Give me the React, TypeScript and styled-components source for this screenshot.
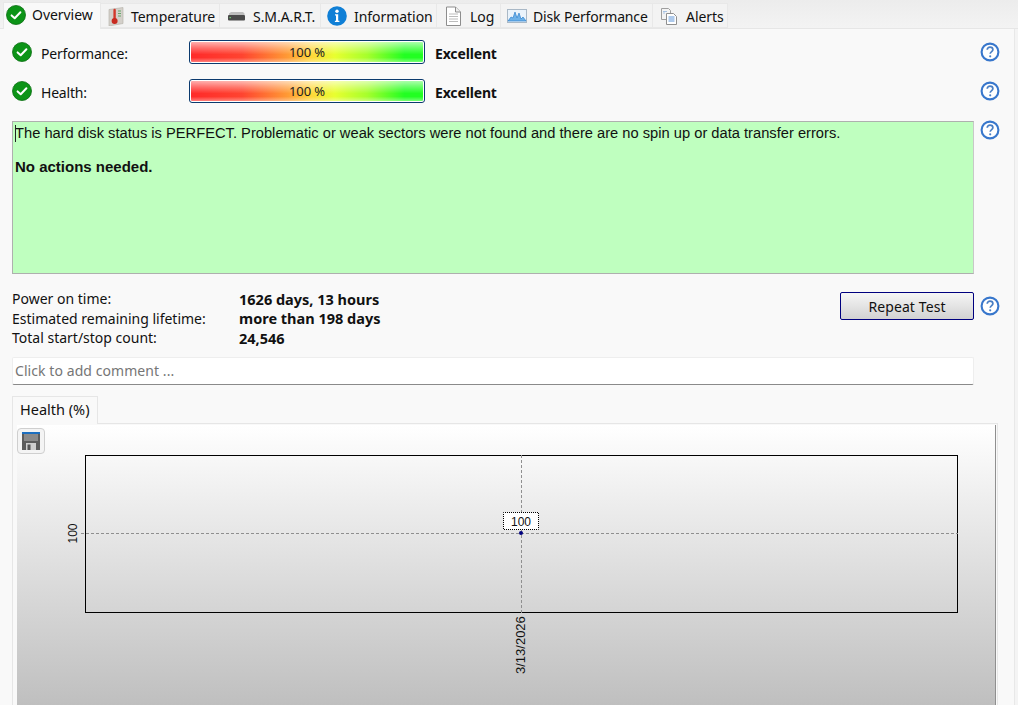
import React from "react";
import styled, { createGlobalStyle } from "styled-components";

const Global = createGlobalStyle`
  html, body { margin: 0; padding: 0; height: 100%; overflow: hidden; background: #f4f4f4; }
  #root { height: 705px; }
`;
const UI = `"Noto Sans", "Open Sans", sans-serif`;
const ARIAL = `"Liberation Sans", Arial, sans-serif`;

const Page = styled.div`
  width: 1018px; height: 705px; overflow: hidden; background: #f4f4f4;
  font-family: ${UI}; font-size: 14px; color: #111; display: flex; flex-direction: column;
`;
const TabBar = styled.div`
  height: 29px; flex: none; display: flex; align-items: flex-end; padding-left: 3px; box-sizing: border-box;
  background: linear-gradient(#ececec, #f3f3f3); border-bottom: 1px solid #e6e6e6;
`;
const Tab = styled.div<{ $w: number; $pad: number; $gap: number; $active?: boolean }>`
  width: ${p => p.$w}px; height: ${p => (p.$active ? 27 : 25)}px; box-sizing: border-box; flex: none;
  display: flex; align-items: center; gap: ${p => p.$gap}px; padding-left: ${p => p.$pad}px;
  padding-top: ${p => (p.$active ? 0 : 1)}px; padding-bottom: ${p => (p.$active ? 3 : 0)}px;
  white-space: nowrap; letter-spacing: ${p => (p.$w === 152 ? -0.15 : -0.05)}px;
  background: ${p => (p.$active ? "#f9f9f9" : "#f3f3f3")};
  border: 1px solid #e8e8e8; border-left-width: ${p => (p.$active ? 1 : 0)}px; border-bottom-width: ${p => (p.$active ? 0 : 1)}px;
  margin-bottom: ${p => (p.$active ? -1 : 0)}px;
  position: relative;
`;
const Body = styled.div`
  flex: 1; display: flex; flex-direction: column; padding: 11px 0 0 12px; min-height: 0; box-sizing: border-box;
  background: #f9f9f9; border-right: 1px solid #e8e8e8; margin-right: 3px;
  position: relative;
`;
const StatusRow = styled.div<{ $gap: number }>`
  display: flex; align-items: center; height: 24px; margin-bottom: ${p => p.$gap}px; position: relative;
`;
const Label = styled.div`
  width: 177px; display: flex; align-items: center; gap: 9px; letter-spacing: -0.2px; flex: none;
`;
const LabelText = styled.span`
  padding-top: 2px;
`;
const Bar = styled.div`
  width: 236px; height: 24px; flex: none; box-sizing: border-box; border: 1px solid #0b3a6e; border-radius: 3px;
  padding: 1px; background: #fff;
`;
const BarFill = styled.div`
  height: 100%; border-radius: 1px; display: flex; align-items: center; justify-content: center;
  font-size: 13px; letter-spacing: -0.1px; color: #222; box-sizing: border-box;
  font-family: ${UI};
  background:
    linear-gradient(rgba(255,255,255,.62) 0%, rgba(255,255,255,.3) 30%, rgba(255,255,255,0) 62%, rgba(255,255,255,0) 78%, rgba(255,255,255,.38) 100%),
    linear-gradient(90deg, #ff2a2a 0%, #ff4430 22%, #ff9c35 42%, #ffd83a 52%, #e8ff30 62%, #a6ff2c 76%, #22ff22 92%, #22ff22 100%);
`;
const Verdict = styled.div`
  margin-left: 10px; padding-top: 2px; font-weight: 700; letter-spacing: -0.15px;
`;
const HelpSlot = styled.div<{ $top?: number }>`
  position: absolute; left: 968px; top: ${p => (p.$top === undefined ? "50%" : `${p.$top}px`)}; transform: translateY(-50%); width: 20px; height: 20px;
`;
const MessageRow = styled.div`
  position: relative; margin-bottom: 15px;
`;
const Message = styled.div`
  width: 962px; height: 153px; box-sizing: border-box; background: #bfffbf; border: 1px solid #aeb0ae;
  border-right-color: #c8c8c8; padding: 3px 2px; font-family: ${ARIAL}; font-size: 14.7px; line-height: 17px; color: #111;
  position: relative;
`;
const Caret = styled.span`
  position: absolute; left: 2px; top: 3px; width: 1px; height: 17px; background: #222;
`;
const Para = styled.p<{ $bold?: boolean }>`
  margin: 0 0 16px; font-weight: ${p => (p.$bold ? 700 : 400)}; font-size: ${p => (p.$bold ? "15px" : "inherit")};
`;
const StatsRow = styled.div`
  display: flex; width: 962px; justify-content: space-between; position: relative; height: 67px;
`;
const StatsGrid = styled.div`
  display: grid; grid-template-columns: 227px auto; grid-auto-rows: 19.5px; align-items: center; align-content: start;
`;
const StatValue = styled.div`
  font-weight: 700; font-size: 14.5px;
`;
const RepeatButton = styled.button`
  width: 134px; height: 28px; margin-top: 3px; padding: 0; border: 1px solid #00007f; border-radius: 2px;
  background: linear-gradient(#f6f6f6, #d2d2d2); font-family: ${UI}; font-size: 14px; letter-spacing: 0.1px; color: #111;
`;
const CommentBox = styled.div`
  width: 962px; height: 28px; margin-top: 1px; box-sizing: border-box; background: #fff;
  border: 1px solid #eeeeee; border-bottom: 1px solid #8a8a8a; border-radius: 2px;
  display: flex; align-items: center; padding: 0 0 2px 2px; color: #767676; letter-spacing: 0.07px;
`;
const ChartTabs = styled.div`
  margin-top: 11px; display: flex; flex-direction: column; flex: 1; min-height: 0; width: 986px;
`;
const ChartTab = styled.div`
  width: 86px; height: 28px; box-sizing: border-box; background: #f9f9f9; border: 1px solid #e6e6e6; border-bottom: 0;
  padding: 2px 0 0 7px; margin-bottom: -1px; position: relative; z-index: 1; font-size: 14.5px;
`;
const ChartPanel = styled.div`
  flex: 1; min-height: 0; border: 1px solid #e6e6e6; border-bottom: 0; padding: 1px 1px 0 4px; background: #f9f9f9;
  display: flex;
`;
const ChartCanvas = styled.div`
  flex: 1; position: relative; background: linear-gradient(#ffffff 0%, #bfbfbf 100%);
  border-right: 1px solid #8f8f8f;
`;
const SaveButton = styled.div`
  position: absolute; left: 0; top: 3px; width: 28px; height: 26px; box-sizing: border-box;
  border: 1px solid #cfcfcf; border-radius: 4px; background: #f4f4f4; display: flex; align-items: center; justify-content: center;
`;
const ChartSvg = styled.svg`
  position: absolute; inset: 0; width: 100%; height: 100%; display: block;
`;
const AxisText = styled.text<{ $size?: number }>`
  font-family: ${ARIAL}; font-size: ${p => p.$size ?? 12}px; fill: #111;
`;

const Check = ({ size = 20 }: { size?: number }) => (
  <svg width={size} height={size} viewBox="0 0 20 20" style={{ flex: "none" }}>
    <circle cx="10" cy="10" r="9.500" fill="#0c9417" stroke="#0a6d12" strokeWidth=".8" />
    <path d="M5.600 10.400 8.700 13.300 14.400 7.200" fill="none" stroke="#fff" strokeWidth="2" strokeLinecap="round" strokeLinejoin="round" />
  </svg>
);
const Thermo = () => (
  <svg width="20" height="20" viewBox="0 0 20 20" style={{ flex: "none" }}>
    <path d="M3 3.500 17 1.500V17.500L3 20Z" fill="#d4d0ca" stroke="#b2aea6" strokeWidth=".6" />
    <path d="M12 5h3M12 7.500h3M12 10h3" stroke="#63a86a" strokeWidth="1.200" />
    <path d="M8.600 4v10" stroke="#d3382a" strokeWidth="2.400" strokeLinecap="round" />
    <circle cx="8.600" cy="15" r="3" fill="#c82a20" />
  </svg>
);
const Drive = () => (
  <svg width="20" height="20" viewBox="0 0 20 20" style={{ flex: "none" }}>
    <path d="M3 7.500 5 6h12l1.500 1.500V9H3Z" fill="#bdbdbd" />
    <rect x="2" y="9" width="17" height="5.500" rx="1" fill="#4a4a4a" />
    <rect x="3.500" y="11" width="1.400" height="1.200" fill="#6fd16f" />
  </svg>
);
const Info = () => (
  <svg width="20" height="20" viewBox="0 0 20 20" style={{ flex: "none" }}>
    <circle cx="10" cy="10" r="9.800" fill="#0f7fd6" />
    <circle cx="10" cy="5.200" r="1.700" fill="#fff" />
    <path d="M8 8.200h3.200v6.600h1.200v1.200H7.900v-1.200h1.100V9.400H8Z" fill="#fff" />
  </svg>
);
const Doc = () => (
  <svg width="20" height="20" viewBox="0 0 20 20" style={{ flex: "none" }}>
    <path d="M3.500 1H12.500L17.500 6V19.500H3.500Z" fill="#fff" stroke="#8d8d8d" />
    <path d="M12.500 1V6H17.500" fill="#eee" stroke="#8d8d8d" />
    <path d="M6 8h9M6 10.500h9M6 13h9M6 15.500h9" stroke="#bcbcbc" />
  </svg>
);
const PerfIcon = () => (
  <svg width="20" height="20" viewBox="0 0 20 20" style={{ flex: "none" }}>
    <rect x=".5" y="3.500" width="19" height="13" fill="#eaf3fb" stroke="#a9b8c6" />
    <path d="M1 15 4 11l2 1 2-6 2 6 2-5 2 6 2-2 3 4Z" fill="#6db1e8" stroke="#2f82cf" strokeWidth=".7" />
  </svg>
);
const Docs = () => (
  <svg width="20" height="20" viewBox="0 0 20 20" style={{ flex: "none" }}>
    <path d="M2.500 2.500h7l2 2v9h-9Z" fill="#f3f3f3" stroke="#9e9e9e" />
    <path d="M7.500 7.500h7l3 3v8h-10Z" fill="#fff" stroke="#8f8f8f" />
    <path d="M9.500 11h6M9.500 13h6M9.500 15h6" stroke="#5d94d8" />
    <path d="M4 5.500h4M4 7h2" stroke="#a7c2e2" />
  </svg>
);
const Help = () => (
  <svg width="20" height="20" viewBox="0 0 20 20" style={{ display: "block" }}>
    <circle cx="10" cy="10" r="8.400" fill="#fff" stroke="#3877cc" strokeWidth="2.100" />
    <path d="M7.200 7.800C7.200 6.200 8.500 5.200 10 5.200 11.700 5.200 12.900 6.300 12.900 7.700 12.900 9.500 10.200 9.700 10.200 11.800" fill="none" stroke="#4a7fc4" strokeWidth="1.700" />
    <circle cx="10.200" cy="14.300" r="1.100" fill="#4a7fc4" />
  </svg>
);
const Floppy = () => (
  <svg width="18" height="18" viewBox="0 0 18 18">
    <path d="M0 0H18V18H0Z" fill="#5c5c5c" />
    <rect x="0" y="0" width="18" height="2" fill="#1c6fc0" />
    <rect x="2" y="2" width="14" height="7" fill="#8a8a8a" />
    <rect x="4" y="11" width="10" height="7" fill="#cfcfcf" />
    <rect x="5.500" y="12.500" width="3" height="5.500" fill="#555" />
  </svg>
);

const tabs: { label: string; w: number; pad: number; gap: number; icon: React.ReactNode; active?: boolean }[] = [
  { label: "Overview", w: 98, pad: 2, gap: 6, icon: <Check />, active: true },
  { label: "Temperature", w: 119, pad: 5, gap: 5, icon: <Thermo /> },
  { label: "S.M.A.R.T.", w: 101, pad: 6, gap: 7, icon: <Drive /> },
  { label: "Information", w: 116, pad: 6, gap: 7, icon: <Info /> },
  { label: "Log", w: 64, pad: 6, gap: 7, icon: <Doc /> },
  { label: "Disk Performance", w: 152, pad: 6, gap: 6, icon: <PerfIcon /> },
  { label: "Alerts", w: 75, pad: 6, gap: 7, icon: <Docs /> },
];

const stats = [
  ["Power on time:", "1626 days, 13 hours"],
  ["Estimated remaining lifetime:", "more than 198 days"],
  ["Total start/stop count:", "24,546"],
];

export default function App() {
  return (
    <Page>
      <Global />
      <TabBar>
        {tabs.map(t => (
          <Tab key={t.label} $w={t.w} $pad={t.pad} $gap={t.gap} $active={t.active}>
            {t.icon}
            <span>{t.label}</span>
          </Tab>
        ))}
      </TabBar>
      <Body>
        <StatusRow $gap={15}>
          <Label><Check /><LabelText>Performance:</LabelText></Label>
          <Bar><BarFill>100 %</BarFill></Bar>
          <Verdict>Excellent</Verdict>
          <HelpSlot><Help /></HelpSlot>
        </StatusRow>
        <StatusRow $gap={18}>
          <Label><Check /><LabelText>Health:</LabelText></Label>
          <Bar><BarFill>100 %</BarFill></Bar>
          <Verdict>Excellent</Verdict>
          <HelpSlot><Help /></HelpSlot>
        </StatusRow>
        <MessageRow>
          <Message>
            <Caret />
            <Para>The hard disk status is PERFECT. Problematic or weak sectors were not found and there are no spin up or data transfer errors.</Para>
            <Para $bold>No actions needed.</Para>
          </Message>
          <HelpSlot $top={9}><Help /></HelpSlot>
        </MessageRow>
        <StatsRow>
          <StatsGrid>
            {stats.map(([k, v]) => (
              <React.Fragment key={k}>
                <div>{k}</div>
                <StatValue>{v}</StatValue>
              </React.Fragment>
            ))}
          </StatsGrid>
          <RepeatButton>Repeat Test</RepeatButton>
          <HelpSlot $top={17}><Help /></HelpSlot>
        </StatsRow>
        <CommentBox>Click to add comment ...</CommentBox>
        <ChartTabs>
          <ChartTab>Health (%)</ChartTab>
          <ChartPanel>
            <ChartCanvas>
              <SaveButton><Floppy /></SaveButton>
              <ChartSvg>
                <rect x="68.500" y="30.500" width="872" height="157" fill="none" stroke="#000" />
                <path d="M64 108.500H941" stroke="#8f8f8f" strokeDasharray="3 2" />
                <path d="M504.500 30V190" stroke="#8f8f8f" strokeDasharray="3 2" />
                <circle cx="504" cy="108" r="2" fill="#00007f" />
                <rect x="486.500" y="87.500" width="35" height="17" fill="#fff" stroke="#000" strokeDasharray="1 1" strokeDashoffset="0.5" />
                <AxisText x="504" y="100.500" textAnchor="middle">100</AxisText>
                <AxisText transform="translate(60 108.500) rotate(-90)" textAnchor="middle">100</AxisText>
                <AxisText $size={13} transform="translate(508 249) rotate(-90)">3/13/2026</AxisText>
              </ChartSvg>
            </ChartCanvas>
          </ChartPanel>
        </ChartTabs>
      </Body>
    </Page>
  );
}
